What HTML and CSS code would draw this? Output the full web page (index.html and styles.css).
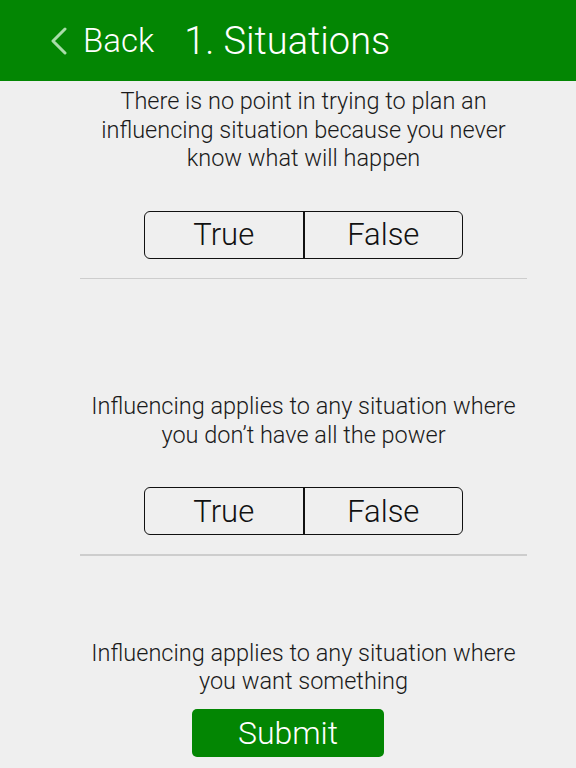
FILE: index.html
```html
<!DOCTYPE html>
<html lang="en">
<head>
<meta charset="utf-8">
<title>1. Situations</title>
<link rel="stylesheet" href="styles.css">
</head>
<body>
<header class="navbar">
  <a class="back" href="#">
    <svg class="chevron" width="18" height="28" viewBox="0 0 18 28"><path d="M15 2 L3 14 L15 26" fill="none" stroke="currentColor" stroke-width="3" stroke-linecap="round" stroke-linejoin="round"/></svg>
    <span class="back-label">Back</span>
  </a>
  <h1 class="title">1. Situations</h1>
</header>
<main class="content">
  <section class="item item-first">
    <p class="question">There is no point in trying to plan an influencing situation because you never know what will happen</p>
    <div class="segment">
      <button class="seg-btn">True</button>
      <button class="seg-btn">False</button>
    </div>
    <hr class="sep">
  </section>
  <section class="item item-second">
    <p class="question">Influencing applies to any situation where you don’t have all the power</p>
    <div class="segment">
      <button class="seg-btn">True</button>
      <button class="seg-btn">False</button>
    </div>
    <hr class="sep">
  </section>
  <section class="item item-third">
    <p class="question">Influencing applies to any situation where you want something</p>
  </section>
</main>
<div class="footer">
  <button class="submit">Submit</button>
</div>
</body>
</html>
```

FILE: styles.css
```css
html, body {
  margin: 0;
  padding: 0;
}
body {
  width: 576px;
  height: 768px;
  overflow: hidden;
  background: #efefef;
  font-family: Roboto, "Liberation Sans", sans-serif;
  font-weight: 300;
  color: #1a1a1a;
}
.navbar {
  height: 81px;
  background: #038603;
  display: flex;
  align-items: center;
  color: #ffffff;
  box-sizing: border-box;
  padding-left: 50px;
}
.back {
  display: flex;
  align-items: center;
  text-decoration: none;
  color: #ffffff;
}
.chevron {
  color: #a9dca9;
  margin-right: 15px;
}
.back-label {
  font-size: 33px;
  font-weight: 300;
}
.title {
  margin: 0 0 0 30px;
  font-size: 38px;
  font-weight: 300;
}
.content {
  width: 447px;
  margin-left: 80px;
}
.item {
  display: flex;
  flex-direction: column;
  align-items: center;
}
.question {
  margin: 0;
  text-align: center;
  font-size: 23.5px;
  line-height: 28.5px;
}
.item-first .question { margin-top: 6px; }
.item-second .question { margin-top: 113px; }
.item-third .question { margin-top: 83px; }
.segment {
  margin-top: 38px;
  width: 319px;
  height: 48px;
  box-sizing: border-box;
  border: 1.6px solid #111;
  border-radius: 6px;
  display: flex;
  overflow: hidden;
}
.seg-btn {
  flex: 1;
  background: transparent;
  border: none;
  font-family: inherit;
  font-weight: 300;
  font-size: 31px;
  color: #111;
  padding: 0;
}
.seg-btn + .seg-btn {
  border-left: 2.5px solid #111;
}
.sep {
  align-self: stretch;
  margin: 19px 0 0 0;
  border: none;
  height: 1.5px;
  background: #cdcdcd;
}
.footer {
  display: flex;
  justify-content: center;
  margin-top: 13px;
}
.submit {
  width: 192px;
  height: 48px;
  background: #038603;
  border: none;
  border-radius: 5px;
  color: #ffffff;
  font-family: inherit;
  font-weight: 300;
  font-size: 32px;
  padding: 0;
}
```
